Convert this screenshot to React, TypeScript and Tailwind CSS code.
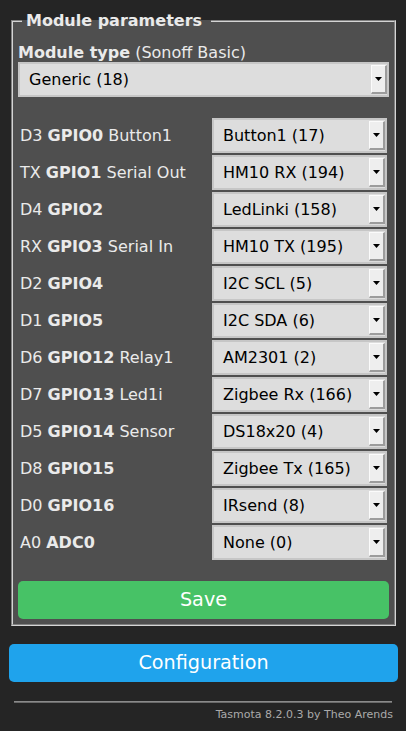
import React from "react";

const rows: { pin: string; gpio: string; name?: string; value: string }[] = [
  { pin: "D3", gpio: "GPIO0", name: "Button1", value: "Button1 (17)" },
  { pin: "TX", gpio: "GPIO1", name: "Serial Out", value: "HM10 RX (194)" },
  { pin: "D4", gpio: "GPIO2", value: "LedLinki (158)" },
  { pin: "RX", gpio: "GPIO3", name: "Serial In", value: "HM10 TX (195)" },
  { pin: "D2", gpio: "GPIO4", value: "I2C SCL (5)" },
  { pin: "D1", gpio: "GPIO5", value: "I2C SDA (6)" },
  { pin: "D6", gpio: "GPIO12", name: "Relay1", value: "AM2301 (2)" },
  { pin: "D7", gpio: "GPIO13", name: "Led1i", value: "Zigbee Rx (166)" },
  { pin: "D5", gpio: "GPIO14", name: "Sensor", value: "DS18x20 (4)" },
  { pin: "D8", gpio: "GPIO15", value: "Zigbee Tx (165)" },
  { pin: "D0", gpio: "GPIO16", value: "IRsend (8)" },
  { pin: "A0", gpio: "ADC0", value: "None (0)" },
];

function Select({ text }: { text: string }) {
  return (
    <div className="flex h-[35px] items-stretch border-2 border-[#c6c6c6] bg-[#dddddd] text-black">
      <div className="flex flex-1 items-center overflow-hidden whitespace-nowrap pl-[9px]">{text}</div>
      <div className="my-[1px] mr-[0px] flex w-[16px] items-center justify-center border-l border-t border-b-2 border-r-2 border-l-[#fbfbfb] border-t-[#fbfbfb] border-b-[#9c9c9c] border-r-[#9c9c9c] bg-[#eeeeee]">
        <svg width="7" height="4" viewBox="0 0 7 4">
          <path d="M0 0H7L3.5 4Z" fill="#000" />
        </svg>
      </div>
    </div>
  );
}

export default function App() {
  return (
    <div className="min-h-[731px] bg-[#252525] px-[8px] pt-[11px] font-['DejaVu_Sans',sans-serif] text-[16px] leading-[19px] text-[#eaeaea]">
      <fieldset className="ml-[3px] mr-[2px] border-2 border-[#d4d4d4] bg-[#4f4f4f] px-[5px] pb-[5px] [border-style:groove]">
        <legend className="ml-[4px] pl-[4px] pr-[9px] font-bold leading-[19px]">Module parameters</legend>
        <div className="mt-[13px]">
          <b>Module type</b> (Sonoff Basic)
        </div>
        <Select text="Generic (18)" />
        <div className="mt-[21px] grid grid-cols-[190px_1fr] gap-x-[2px] gap-y-[2px] px-[2px]">
          {rows.map((r) => (
            <React.Fragment key={r.gpio}>
              <div className="flex items-center whitespace-nowrap">
                {r.pin}&nbsp;<b>{r.gpio}</b>
                {r.name ? <>&nbsp;{r.name}</> : null}
              </div>
              <Select text={r.value} />
            </React.Fragment>
          ))}
        </div>
        <button className="mt-[21px] block h-[38px] w-full rounded-[5px] bg-[#47c266] text-center text-[19.2px] leading-[38px] text-white">
          Save
        </button>
      </fieldset>
      <button className="ml-[1px] mt-[18px] block h-[38px] w-[389px] rounded-[5px] bg-[#1fa3ec] text-center text-[19.2px] leading-[38px] text-white">
        Configuration
      </button>
      <div className="mx-[6px] mt-[19px] h-[2px] border-t border-[#8a8a8a] border-b border-b-[#6a6a6a]" />
      <div className="mt-[5px] pr-[5px] text-right text-[11px] leading-[13px] text-[#aaaaaa]">
        Tasmota 8.2.0.3 by Theo Arends
      </div>
    </div>
  );
}
